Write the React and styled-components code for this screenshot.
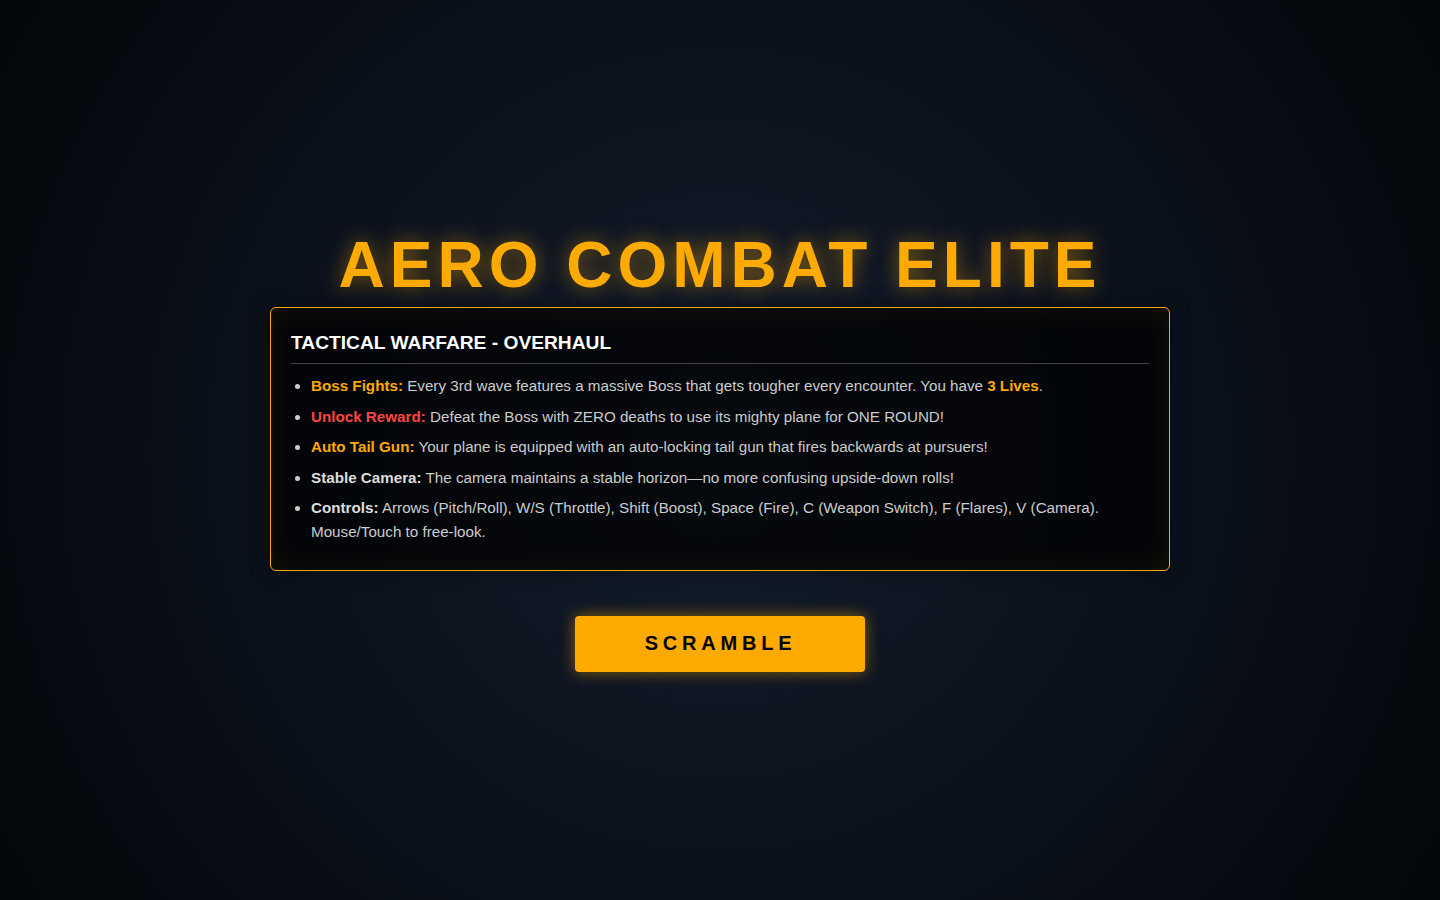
import React from 'react'
import styled, { createGlobalStyle } from 'styled-components'

const Global = createGlobalStyle`
  html, body { margin: 0; padding: 0; }
  body {
    font-family: "Liberation Sans", Arial, sans-serif;
    background: radial-gradient(circle at center, #131d2c 0%, #0b111b 55%, #04070a 100%);
    color: #ccc;
    min-height: 100vh;
  }
`

const Screen = styled.div`
  min-height: 100vh;
  display: flex;
  flex-direction: column;
  align-items: center;
  justify-content: center;
`

const Title = styled.h1`
  margin: 0 0 5px;
  font-size: 64px;
  line-height: 74px;
  font-weight: 700;
  letter-spacing: 5px;
  color: #ffaa00;
  text-shadow: 0 0 20px rgba(255, 170, 0, 0.5);
`

const Panel = styled.div`
  width: 900px;
  box-sizing: border-box;
  padding: 24px 20px 19px;
  background: rgba(0, 0, 0, 0.7);
  border: 1px solid #ffaa00;
  border-radius: 6px;
  box-shadow: inset 0 0 30px rgba(255, 170, 0, 0.08), 0 0 20px rgba(0, 0, 0, 0.4);
`

const Heading = styled.h3`
  margin: 0 0 10px;
  padding-bottom: 9px;
  font-size: 19.2px;
  line-height: 22px;
  font-weight: 700;
  color: #fff;
  border-bottom: 1px solid #444;
`

const List = styled.ul`
  margin: 0;
  padding-left: 20px;
`

const Item = styled.li`
  font-size: 15.2px;
  line-height: 24px;
  margin-bottom: 6.5px;
  color: #ccc;
`

const Label = styled.b`
  color: ${p => p.tone || '#ddd'};
`

const Button = styled.button`
  margin-top: 45px;
  width: 290px;
  height: 56px;
  border: none;
  border-radius: 4px;
  background: #ffaa00;
  color: #000;
  font-family: "Liberation Sans", Arial, sans-serif;
  font-size: 20px;
  font-weight: 700;
  letter-spacing: 4.8px;
  padding: 0 0 0 1px;
  box-shadow: 0 0 15px rgba(255, 170, 0, 0.5);
  cursor: pointer;
`

const ORANGE = '#ffaa00'
const RED = '#ff4444'

export default function App() {
  return (
    <Screen>
      <Global />
      <Title>AERO COMBAT ELITE</Title>
      <Panel>
        <Heading>TACTICAL WARFARE - OVERHAUL</Heading>
        <List>
          <Item>
            <Label tone={ORANGE}>Boss Fights:</Label> Every 3rd wave features a massive Boss that gets tougher every encounter. You have <Label tone={ORANGE}>3 Lives</Label>.
          </Item>
          <Item>
            <Label tone={RED}>Unlock Reward:</Label> Defeat the Boss with ZERO deaths to use its mighty plane for ONE ROUND!
          </Item>
          <Item>
            <Label tone={ORANGE}>Auto Tail Gun:</Label> Your plane is equipped with an auto-locking tail gun that fires backwards at pursuers!
          </Item>
          <Item>
            <Label>Stable Camera:</Label> The camera maintains a stable horizon—no more confusing upside-down rolls!
          </Item>
          <Item>
            <Label>Controls:</Label> Arrows (Pitch/Roll), W/S (Throttle), Shift (Boost), Space (Fire), C (Weapon Switch), F (Flares), V (Camera). Mouse/Touch to free-look.
          </Item>
        </List>
      </Panel>
      <Button>SCRAMBLE</Button>
    </Screen>
  )
}
